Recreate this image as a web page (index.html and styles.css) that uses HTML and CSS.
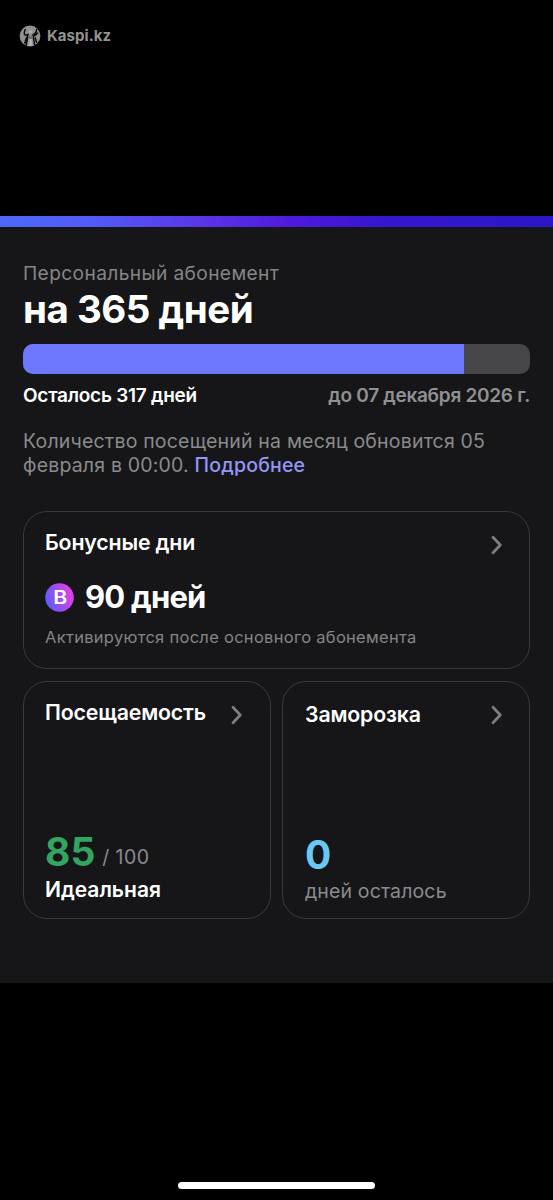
FILE: index.html
```html
<!DOCTYPE html>
<html lang="ru">
<head>
<meta charset="utf-8">
<title>Персональный абонемент</title>
<link rel="stylesheet" href="styles.css">
</head>
<body>
<header class="brand">
  <svg class="brand-logo" viewBox="0 0 22 22">
    <circle cx="11" cy="11" r="10.4" fill="#919191"/>
    <path d="M6.200 4.500c-1 2.300-1.200 4.500-.2 5.300.9.700 2.200.1 3.300-.5M8.800 9.800l-.4 4.200-1.200 6M7.600 12.500l-1.800 5.500M14 9.600c2.200-.6 3.500-2.500 3.600-5M13.800 11c2.500 0 3.700-1.200 4.800-2.800M14.200 11.500l1.300 8.200M16.300 13l1.200 4.200" fill="none" stroke="#0b0b0b" stroke-width="1.500" stroke-linecap="round"/>
    <path d="M9 10.800h5l-.4 3.200H9z" fill="#6f6f6f"/>
    <path d="M9.900 14h3.100l.5 7H9.500z" fill="#b0b0b0"/>
    <circle cx="11.600" cy="6.800" r="2" fill="#a8a8a8"/>
  </svg>
  <span class="brand-name">Kaspi.kz</span>
</header>
<main class="sheet">
  <div class="accent"></div>
  <section class="content">
    <p class="eyebrow">Персональный абонемент</p>
    <h1 class="title">на 365 дней</h1>
    <div class="progress"><div class="progress-fill"></div></div>
    <div class="period"><span class="left">Осталось 317 дней</span><span class="until">до 07 декабря 2026 г.</span></div>
    <p class="info">Количество посещений на месяц обновится 05<br>февраля в 00:00. <a class="link">Подробнее</a></p>
    <div class="cards">
      <article class="card bonus">
        <div class="card-head"><h2 class="card-title">Бонусные дни</h2>
          <svg class="chevron" viewBox="0 0 12 20"><path d="M2 2.300 9.300 10 2 17.700"/></svg></div>
        <div class="bonus-value">
          <svg class="badge" viewBox="0 0 29 29">
            <defs><linearGradient id="badge-fill" x1="0" y1=".7" x2="1" y2=".3"><stop offset=".1" stop-color="#655cf5"/><stop offset=".5" stop-color="#a34df0"/><stop offset=".92" stop-color="#df3fe7"/></linearGradient></defs>
            <circle cx="14.500" cy="14.500" r="14.300" fill="url(#badge-fill)"/>
            <text class="badge-letter" x="8.300" y="21.300" textLength="14" lengthAdjust="spacingAndGlyphs">B</text>
          </svg>
          <strong class="bonus-days">90 дней</strong></div>
        <p class="note">Активируются после основного абонемента</p>
      </article>
      <article class="card visits">
        <div class="card-head"><h2 class="card-title">Посещаемость</h2>
          <svg class="chevron" viewBox="0 0 12 20"><path d="M2 2.300 9.300 10 2 17.700"/></svg></div>
        <div class="stat">
          <div class="score"><strong class="number green">85</strong><span class="total">/ 100</span></div>
          <p class="rating">Идеальная</p>
        </div>
      </article>
      <article class="card freeze">
        <div class="card-head"><h2 class="card-title">Заморозка</h2>
          <svg class="chevron" viewBox="0 0 12 20"><path d="M2 2.300 9.300 10 2 17.700"/></svg></div>
        <div class="stat">
          <strong class="number blue">0</strong>
          <p class="remaining">дней осталось</p>
        </div>
      </article>
    </div>
  </section>
</main>
<footer class="home"><div class="home-bar"></div></footer>
</body>
</html>
```
FILE: styles.css
```css
* { box-sizing: border-box; margin: 0; padding: 0; }
body {
  width: 553px;
  height: 1200px;
  display: flex;
  flex-direction: column;
  overflow: hidden;
  background: #000;
  color: #fff;
  font-family: Inter, "Liberation Sans", sans-serif;
  white-space: nowrap;
}
.brand { height: 216px; padding: 25px 0 0 19px; display: flex; align-items: flex-start; gap: 6px; }
.brand-logo { width: 22px; height: 22px; }
.brand-name { font-size: 15px; line-height: 22px; font-weight: 700; color: #929292; letter-spacing: .05px; }
.sheet { height: 767px; background: #161618; }
.accent { height: 11px; background: linear-gradient(90deg, #4d69f8 0%, #525af6 17%, #5a36e8 36%, #4f1ade 52%, #3516cf 70%, #2b17c6 100%); }
.content { padding: 34px 23px 0; }
.eyebrow { font-size: 19.200px; line-height: 24px; letter-spacing: .36px; color: #858587; }
.title { margin-top: 2px; font-size: 38.500px; line-height: 44px; font-weight: 650; letter-spacing: -.5px; }
.progress { margin-top: 13px; height: 30px; border-radius: 10px; background: #464648; overflow: hidden; }
.progress-fill { width: 441px; height: 100%; background: #6e78ff; }
.period { margin-top: 10px; display: flex; justify-content: space-between; font-size: 19px; line-height: 24px; font-weight: 600; }
.left { letter-spacing: -.26px; }
.until { color: #919193; letter-spacing: -.28px; }
.info { margin-top: 21px; font-size: 19.500px; line-height: 24px; letter-spacing: .19px; color: #8b8b8d; }
.link { color: #9498f4; font-weight: 500; }
.cards { margin-top: 34px; display: grid; grid-template-columns: 248px 248px; grid-template-rows: 158px 238px; gap: 12px 11px; }
.card { border: 1.500px solid #39393c; border-radius: 24px; padding: 16px 26px 0 21px; display: flex; flex-direction: column; }
.bonus { grid-column: 1 / -1; }
.card-head { height: 28px; display: flex; justify-content: space-between; }
.card-title { font-size: 21.300px; line-height: 28px; font-weight: 600; letter-spacing: -.16px; }
.chevron { width: 12px; height: 20px; margin-top: 7px; flex: none; }
.chevron path { fill: none; stroke: #7d7d80; stroke-width: 2.800px; stroke-linecap: round; stroke-linejoin: round; }
.bonus-value { margin-top: 21px; height: 40px; display: flex; align-items: center; gap: 11px; }
.badge { width: 29px; height: 29px; flex: none; }
.badge-letter { fill: #fff; font-size: 19px; font-weight: 600; }
.bonus-days { font-size: 31px; line-height: 40px; font-weight: 650; letter-spacing: -.8px; }
.note { margin-top: 10px; font-size: 16.500px; line-height: 20px; letter-spacing: .29px; color: #858587; }
.visits { padding-bottom: 14px; padding-right: 27px; }
.stat { margin-top: auto; }
.score { display: flex; align-items: flex-start; gap: 7px; height: 44px; }
.number { display: block; font-size: 39px; line-height: 44px; font-weight: 700; }
.score .number { margin-top: -1px; }
.green { color: #34a560; }
.blue { color: #68c9f5; }
.total { margin-top: 14px; font-size: 19.500px; line-height: 24px; letter-spacing: .4px; color: #8b8b8d; }
.rating { margin-top: 1px; font-size: 21px; line-height: 28px; font-weight: 600; letter-spacing: 0; }
.freeze { padding-top: 18px; padding-left: 22px; padding-bottom: 13px; }
.freeze .chevron { margin-top: 5px; }
.remaining { font-size: 19.500px; line-height: 28px; letter-spacing: .13px; color: #8b8b8d; }
.home { margin-top: auto; height: 18px; display: flex; justify-content: center; }
.home-bar { width: 197px; height: 7px; border-radius: 4px; background: #fff; }
```
